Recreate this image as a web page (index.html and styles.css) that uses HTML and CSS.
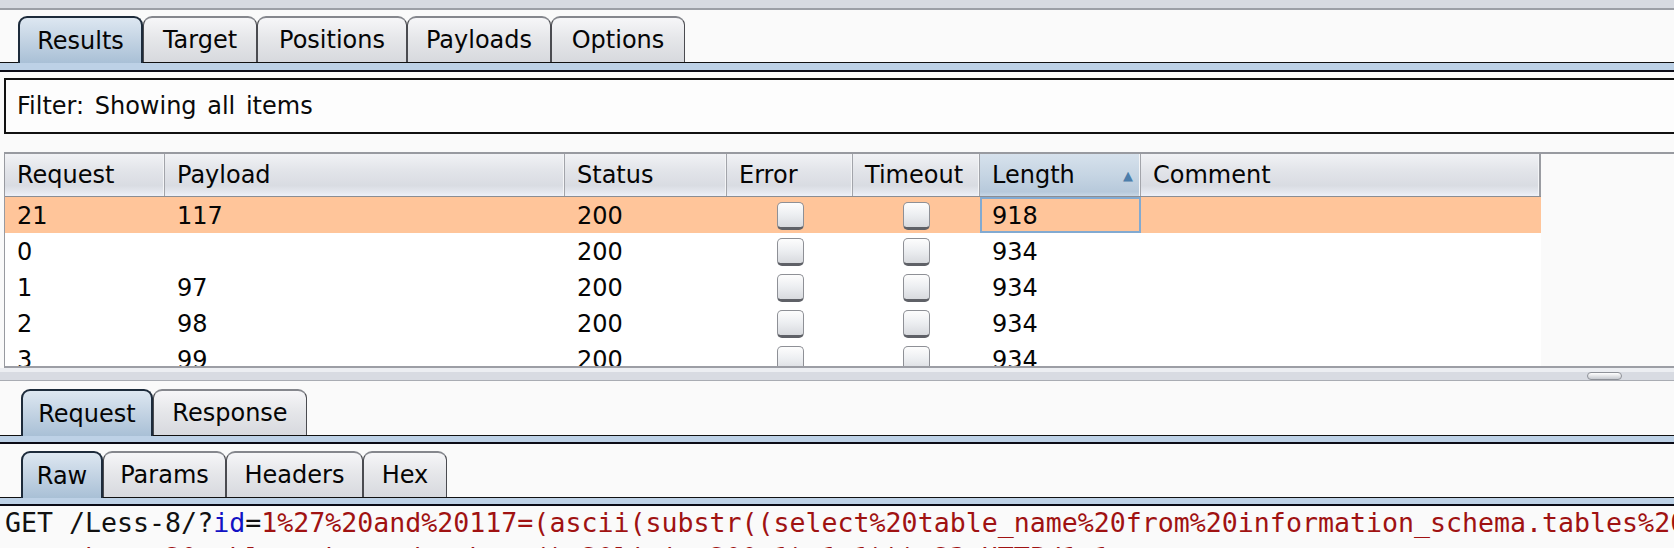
FILE: index.html
```html
<!DOCTYPE html>
<html>
<head>
<meta charset="utf-8">
<link rel="stylesheet" href="styles.css">
</head>
<body>
<div class="topbar"></div>

<div class="tabstrip">
  <div class="tab active t-results">Results</div>
  <div class="tab t-target">Target</div>
  <div class="tab t-positions">Positions</div>
  <div class="tab t-payloads">Payloads</div>
  <div class="tab t-options">Options</div>
</div>
<div class="tabrule"></div>

<div class="filter">Filter: Showing all items</div>

<div class="scrollpane">
  <div class="table">
    <div class="head">
      <div class="th">Request</div>
      <div class="th">Payload</div>
      <div class="th">Status</div>
      <div class="th">Error</div>
      <div class="th">Timeout</div>
      <div class="th sorted"><span>Length</span><span class="arrow">▲</span></div>
      <div class="th">Comment</div>
    </div>
    <div class="row sel">
      <div class="td">21</div><div class="td">117</div><div class="td">200</div>
      <div class="td center"><div class="cb"></div></div>
      <div class="td center"><div class="cb"></div></div>
      <div class="td focus">918</div><div class="td"></div>
    </div>
    <div class="row">
      <div class="td">0</div><div class="td"></div><div class="td">200</div>
      <div class="td center"><div class="cb"></div></div>
      <div class="td center"><div class="cb"></div></div>
      <div class="td">934</div><div class="td"></div>
    </div>
    <div class="row">
      <div class="td">1</div><div class="td">97</div><div class="td">200</div>
      <div class="td center"><div class="cb"></div></div>
      <div class="td center"><div class="cb"></div></div>
      <div class="td">934</div><div class="td"></div>
    </div>
    <div class="row">
      <div class="td">2</div><div class="td">98</div><div class="td">200</div>
      <div class="td center"><div class="cb"></div></div>
      <div class="td center"><div class="cb"></div></div>
      <div class="td">934</div><div class="td"></div>
    </div>
    <div class="row">
      <div class="td">3</div><div class="td">99</div><div class="td">200</div>
      <div class="td center"><div class="cb"></div></div>
      <div class="td center"><div class="cb"></div></div>
      <div class="td">934</div><div class="td"></div>
    </div>
  </div>
</div>

<div class="splitter"><div class="handle"></div></div>

<div class="tabstrip lower">
  <div class="tab active t-request">Request</div>
  <div class="tab t-response">Response</div>
</div>
<div class="tabrule small"></div>

<div class="tabstrip lower second">
  <div class="tab active t-raw">Raw</div>
  <div class="tab t-params">Params</div>
  <div class="tab t-headers">Headers</div>
  <div class="tab t-hex">Hex</div>
</div>
<div class="tabrule small"></div>

<div class="code"><span class="plain">GET /Less-8/?</span><span class="key">id</span><span class="plain">=</span><span class="val">1%27%20and%20117=(ascii(substr((select%20table_name%20from%20information_schema.tables%20where%20table_schema=database()%20limit%200,1),1,1)))%23</span>
<span class="val">    where%20table_schema=database()%20limit%200,1),1,1)))%23 HTTP/1.1</span></div>
</body>
</html>
```

FILE: styles.css
```css
* { box-sizing: border-box; margin: 0; padding: 0; }
html, body { width: 1674px; height: 548px; overflow: hidden; }
body {
  background: #fafafa;
  font-family: "DejaVu Sans", "Noto Sans", sans-serif;
  font-size: 24px;
  color: #111;
}

.topbar {
  height: 10px;
  background: #d7dae1;
  border-bottom: 2px solid #9c9fa6;
}

/* tab strips */
.tabstrip {
  display: flex;
  align-items: flex-end;
  height: 53px;
  padding: 6px 0 0 18px;
  border-bottom: 1px solid #111;
}
.tabstrip.lower { height: 55px; padding: 8px 0 0 21px; }
.tabstrip.lower.second { height: 54px; padding-top: 7px; }

.tab {
  height: 46px;
  display: flex;
  align-items: center;
  justify-content: center;
  border-style: solid;
  border-width: 2px 1px 0 1px;
  border-color: #85878d #4a4b50 #4a4b50 #4a4b50;
  border-radius: 9px 9px 0 0;
  background: linear-gradient(#f6f6f8, #e6e7ea 45%, #d7d9de);
  color: #050505;
}
.tab.active {
  height: 47px;
  margin-bottom: -1px;
  border-width: 2px 2px 0 2px;
  border-color: #1d2b3b;
  background: linear-gradient(#dde7f1, #c3d3e3 50%, #a9c0d6);
  position: relative;
  z-index: 1;
}

.t-results { width: 125px; }
.t-target { width: 114px; }
.t-positions { width: 150px; }
.t-payloads { width: 144px; }
.t-options { width: 134px; }
.t-request { width: 132px; }
.t-response { width: 154px; }
.t-raw { width: 82px; }
.t-params { width: 123px; }
.t-headers { width: 137px; }
.t-hex { width: 84px; }

.tabrule {
  height: 9px;
  background: #bdd1e6;
  border-bottom: 2px solid #0b0b16;
}
.tabrule.small { height: 8px; }

/* filter */
.filter {
  margin: 6px -6px 0 4px;
  height: 56px;
  border: 2px solid #111;
  background: #fdfdfd;
  display: flex;
  align-items: center;
  padding-left: 11px;
  word-spacing: 3px;
  color: #0a0a0a;
}

/* results table */
.scrollpane {
  margin: 18px 0 0 4px;
  height: 216px;
  border-top: 2px solid #989aa0;
  border-left: 1px solid #989aa0;
  border-bottom: 2px solid #9c9ea5;
  overflow: hidden;
  background: #fafafa;
}
.table { width: 1536px; background: #fff; }
.head, .row {
  display: grid;
  grid-template-columns: 160px 400px 162px 126px 127px 161px 400px;
}
.head {
  height: 43px;
  border-bottom: 1px solid #8b8d93;
  background: linear-gradient(#f1f2f5 0%, #e2e4e9 40%, #d9dce2 75%, #e4e7ee 90%, #eef1f9 100%);
}
.th {
  display: flex;
  align-items: center;
  padding-left: 12px;
  border-right: 1px solid #a2a4aa;
  box-shadow: inset -1px 0 0 #f4f5f7;
  color: #050505;
}
.th:last-child { border-right: 2px solid #9a9ca2; }
.th.sorted {
  justify-content: space-between;
  padding-right: 7px;
  background: linear-gradient(#d6e1ec 0%, #c6d5e3 50%, #b7c9db 90%, #c9d8e6 100%);
}
.arrow { font-size: 13px; color: #4d7eab; }

.row { height: 36px; padding-top: 1px; }
.row.sel { background: #ffc59a; }
.td {
  display: flex;
  align-items: center;
  padding-left: 12px;
  color: #050505;
}
.td.center { justify-content: center; padding-left: 0; }
.td.focus { box-shadow: inset 0 0 0 2px #82aad1; margin-top: -1px; padding-top: 1px; }
.cb {
  width: 27px;
  height: 28px;
  border: 1px solid #8e9096;
  border-bottom: 3px solid #5f6167;
  border-radius: 5px;
  background: linear-gradient(#fdfdfd, #eceef1 50%, #d8dade);
}

/* splitter */
.splitter {
  position: relative;
  height: 13px;
  background: #d8dbe2;
  border-top: 4px solid #eceef2;
  border-bottom: 1px solid #a9acb3;
}
.handle {
  position: absolute;
  right: 52px;
  top: 0;
  width: 35px;
  height: 8px;
  border: 1px solid #8f9299;
  border-radius: 5px;
  background: linear-gradient(#ffffff, #c7cad0);
}

/* raw request */
.code {
  font-family: "DejaVu Sans Mono", "Liberation Mono", monospace;
  font-size: 26.6px;
  line-height: 35px;
  margin-top: -1px;
  padding-left: 5px;
  white-space: pre;
  overflow: hidden;
  color: #111;
}
.key { color: #1212c4; }
.val { color: #a01212; }
```
